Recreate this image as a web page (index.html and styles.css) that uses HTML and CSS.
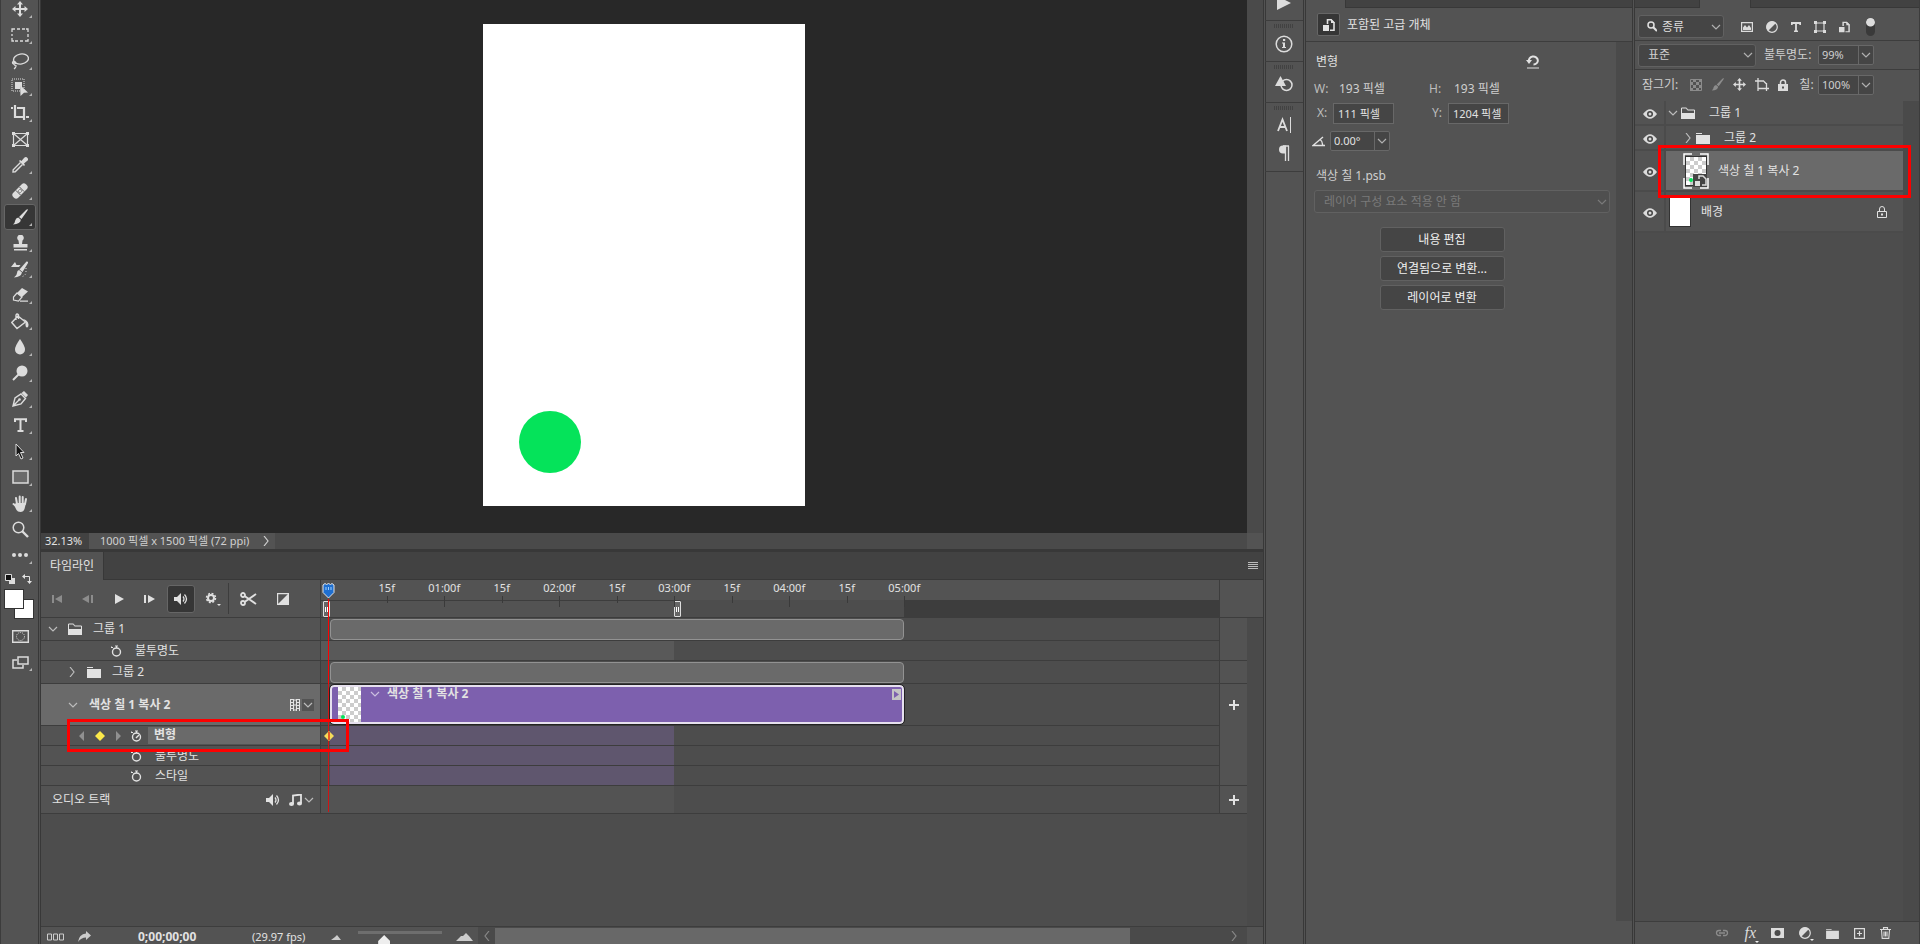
FILE: index.html
```html
<!DOCTYPE html>
<html lang="ko">
<head>
    <meta charset="UTF-8">
    <meta name="viewport" content="width=device-width, initial-scale=1.0">
    <title>타임라인</title>
    <link rel="stylesheet" href="styles.css">
</head>
<body>
    <!-- shared icons -->
    <svg class="defs" aria-hidden="true">
        <symbol id="down" viewBox="0 0 10 10"><path d="M1 3l4 4 4-4" fill="none" stroke="currentColor" stroke-width="1.2"/></symbol>
        <symbol id="right" viewBox="0 0 10 10"><path d="M3 0l4 5-4 5" fill="none" stroke="currentColor" stroke-width="1.2"/></symbol>
        <symbol id="folder" viewBox="0 0 14 12"><path d="M0 1h6v1H0zM0 3h14v9H0z" fill="currentColor"/></symbol>
        <symbol id="folder-open" viewBox="0 0 14 12"><path d="M.5 11V1h5l1 2h7v8z" fill="none" stroke="currentColor"/><path d="M0 6h14v6H0z" fill="currentColor"/></symbol>
        <symbol id="watch" viewBox="0 0 12 12"><circle cx="6.500" cy="7" r="4" fill="none" stroke="currentColor" stroke-width="1.400"/><path d="M5 1h3M6.500 1v2M1.500 1.500l2 2M1 2.500h2" stroke="currentColor" fill="none"/></symbol>
        <symbol id="speaker" viewBox="0 0 14 12"><path d="M0 4h3l4-4v12L3 8H0z" fill="currentColor"/><path d="M9 3.500q2 2.500 0 5M10.500 1.500q4 4.500 0 9" fill="none" stroke="currentColor" stroke-width="1.300"/></symbol>
        <symbol id="plus" viewBox="0 0 10 10"><path d="M4 0h2v4h4v2H6v4H4V6H0V4h4z" fill="currentColor"/></symbol>
        <symbol id="move" viewBox="0 0 16 16"><path d="M8 0l3 3.500H9V7h3.500V5L16 8l-3.500 3V9H9v3.500h2L8 16l-3-3.500h2V9H3.500v2L0 8l3.500-3v2H7V3.500H5z" fill="currentColor"/></symbol>
        <symbol id="brush" viewBox="0 0 16 16"><path d="M15.500 0q.5.5 0 1.500L9.500 10 7 8 14 1zM6.200 8.500l2.600 2.200Q8.500 15 1 15.500 3 14 3.200 11.500 3.800 9 6.200 8.500z" fill="currentColor"/></symbol>
        <symbol id="half-circle" viewBox="0 0 12 12"><circle cx="6" cy="6" r="5.300" fill="none" stroke="currentColor" stroke-width="1.200"/><path d="M10 2A5.600 5.600 0 0 0 2 10z" fill="currentColor"/></symbol>
        <symbol id="smart" viewBox="0 0 12 12"><path d="M4.500 5V.7h3.500l3 3v7.600H7" fill="none" stroke="currentColor" stroke-width="1.600"/><path d="M8 0v4h4zM0 6h6v6H0z" fill="currentColor"/></symbol>
        <symbol id="eye" viewBox="0 0 14 10"><path d="M0 5q7-9.500 14 0-7 9.500-14 0z" fill="currentColor"/><circle cx="7" cy="5" r="3" fill="#454545"/><circle cx="7" cy="5" r="1.500" fill="currentColor"/></symbol>
        <symbol id="checks" viewBox="0 0 12 12"><path d="M.5.5h11v11H.5z" fill="none" stroke="currentColor"/><path d="M3 0h3v3H3zM9 0h3v3H9zM0 3h3v3H0zM6 3h3v3H6zM3 6h3v3H3zM9 6h3v3H9zM0 9h3v3H0zM6 9h3v3H6z" fill="currentColor"/></symbol>
    </svg>

    <div class="app">
        <nav class="toolbar" aria-label="도구">
            <button class="tool" type="button" aria-label="이동"><svg width="16" height="16"><use href="#move"/></svg></button>
            <button class="tool" type="button" aria-label="선택 윤곽"><svg width="18" height="14" viewBox="0 0 18 14"><path d="M1 4V1h3M6 1h3M11 1h3M15 1h2v3M17 6v3M17 11v2h-3M12 13H9M7 13H4M3 13H1v-3M1 8V6" fill="none" stroke="currentColor" stroke-width="1.300"/></svg></button>
            <button class="tool" type="button" aria-label="올가미"><svg width="18" height="17" viewBox="0 0 18 17"><ellipse cx="10" cy="6" rx="7.500" ry="5" transform="rotate(-10 10 6)" fill="none" stroke="currentColor" stroke-width="1.400"/><path d="M2.500 8q-2 2 0 3 3 0 2-2-2-1-2.500 1 2 3 3 3-.5 2-2 3" fill="none" stroke="currentColor" stroke-width="1.300"/></svg></button>
            <button class="tool" type="button" aria-label="개체 선택"><svg width="18" height="18" viewBox="0 0 18 18"><path d="M1 1h12v12H1z" fill="none" stroke="currentColor" stroke-dasharray="1 1"/><path d="M4 4h7v5L9 7v4H4zM9 7l8 7.500-4 .2L9.500 18z" fill="currentColor"/></svg></button>
            <button class="tool" type="button" aria-label="자르기"><svg width="18" height="18" viewBox="0 0 18 18"><path d="M0 4h2M4 1v12h10M6 4h7v12M15 13h3" fill="none" stroke="currentColor" stroke-width="2.200"/></svg></button>
            <button class="tool plain" type="button" aria-label="프레임"><svg width="17" height="15" viewBox="0 0 17 15"><path d="M1.500 1.500h14v12h-14zl14 12M15.500 1.500l-14 12" fill="none" stroke="currentColor" stroke-width="1.200"/><path d="M0 0h3v3H0zM14 0h3v3h-3zM0 12h3v3H0zM14 12h3v3h-3z" fill="currentColor"/></svg></button>
            <button class="tool" type="button" aria-label="스포이드"><svg width="16" height="16" viewBox="0 0 16 16"><path d="M8.500 5.500L1.200 12.800l-.2 2.200 2.200-.2 7.300-7.300" fill="none" stroke="currentColor" stroke-width="1.400"/><path d="M7 4l1-1 1.500 1L12 1q2-2 3.500 0t-.5 3l-3 2.500 1 1.500-1 1z" fill="currentColor"/></svg></button>
            <button class="tool" type="button" aria-label="복구 브러시"><svg width="18" height="18" viewBox="0 0 18 18"><rect x="0" y="5.500" width="18" height="7" rx="3" transform="rotate(-45 9 9)" fill="currentColor"/><path d="M5 8.500L9.500 13M8.500 5L13 9.500" stroke="#535353"/><path d="M9 7v1M9 10v1M7 9h1M10 9h1" stroke="#535353"/></svg></button>
            <button class="tool active" type="button" aria-label="브러시"><svg width="16" height="16"><use href="#brush"/></svg></button>
            <button class="tool" type="button" aria-label="도장"><svg width="15" height="16" viewBox="0 0 15 16"><path d="M5.500 5.500a3.300 3.300 0 1 1 4 0L9 9h5.500v3.500H.5V9H6zM1 14h13v1.400H1z" fill="currentColor"/></svg></button>
            <button class="tool" type="button" aria-label="작업 내역 브러시"><svg width="18" height="17" viewBox="0 0 18 17"><path d="M17 2l-5.500 9L8.500 8.500 15.500.5q2-.5 1.500 1.500zM8 9l3 2.500Q10 16 3 16.500q3-2 3-4.500T8 9zM0 6l4-5 1.500 3h4L8 6z" fill="currentColor"/><path d="M15 7v5q-1 3-5 4" fill="none" stroke="currentColor" stroke-dasharray="1 2"/></svg></button>
            <button class="tool" type="button" aria-label="지우개"><svg width="17" height="14" viewBox="0 0 17 14"><path d="M5 5l5-5 6 3.500L10 9z" fill="currentColor"/><path d="M5 5L1.500 9v3l5 1.200L10 9zM8 13.200h8" fill="none" stroke="currentColor" stroke-width="1.200"/></svg></button>
            <button class="tool" type="button" aria-label="페인트 통"><svg width="18" height="17" viewBox="0 0 18 17"><path d="M7 3l7.500 6L6 15.500.8 9.500zM5 7V2q1-2 2.500 0v4" fill="none" stroke="currentColor" stroke-width="1.400"/><path d="M12 6q5 1 5.500 5.500 0 3-1.500 3t-1.500-3V9z" fill="currentColor"/></svg></button>
            <button class="tool" type="button" aria-label="흐림"><svg width="12" height="16" viewBox="0 0 12 16"><path d="M6 0q5 7 5 10.500a5 5 0 0 1-10 0Q1 7 6 0z" fill="currentColor"/></svg></button>
            <button class="tool" type="button" aria-label="닷지"><svg width="16" height="16" viewBox="0 0 16 16"><circle cx="10" cy="6" r="5.500" fill="currentColor"/><path d="M1 15l6-6" stroke="currentColor" stroke-width="2"/></svg></button>
            <button class="tool" type="button" aria-label="펜"><svg width="16" height="16" viewBox="0 0 16 16"><path d="M1 15L3 7l6-4 4.500 4.500L9 13zl6-6" fill="none" stroke="currentColor" stroke-width="1.400"/><circle cx="7.500" cy="8.500" r="1.300" fill="currentColor"/><path d="M9.500 2L12 0l4 4-2 2.500z" fill="currentColor"/></svg></button>
            <button class="tool" type="button" aria-label="문자"><svg width="13" height="14" viewBox="0 0 13 14"><path d="M1 4V1.200h11V4M6.500 1v12M3.500 13h6" fill="none" stroke="currentColor" stroke-width="2"/></svg></button>
            <button class="tool" type="button" aria-label="경로 선택"><svg width="12" height="17" viewBox="0 0 12 17"><path d="M2 1l8 8.500H6.500L9 15l-2 1-2.500-5.500L2 13z" fill="#151515" stroke="currentColor"/></svg></button>
            <button class="tool" type="button" aria-label="사각형"><svg width="17" height="14" viewBox="0 0 17 14"><path d="M1 1h15v12H1z" fill="#6b6b6b" stroke="currentColor" stroke-width="1.500"/></svg></button>
            <button class="tool" type="button" aria-label="손"><svg width="17" height="17" viewBox="0 0 17 17"><path d="M5 9L4 3M7.700 8V1.500M10.700 8V2M13 9l1-5M5.500 12L1.500 9" stroke="currentColor" stroke-width="2" stroke-linecap="round"/><path d="M4 8h10l-1.500 6q-1 3-4 3t-4-2L2 10z" fill="currentColor"/></svg></button>
            <button class="tool plain" type="button" aria-label="돋보기"><svg width="17" height="17" viewBox="0 0 17 17"><circle cx="6.500" cy="6.500" r="5.300" fill="none" stroke="currentColor" stroke-width="1.500"/><path d="M10 10l6 6" stroke="currentColor" stroke-width="2.400"/></svg></button>
            <button class="tool" type="button" aria-label="도구 모음 편집"><svg width="16" height="4" viewBox="0 0 16 4"><circle cx="2" cy="2" r="2" fill="currentColor"/><circle cx="8" cy="2" r="2" fill="currentColor"/><circle cx="14" cy="2" r="2" fill="currentColor"/></svg></button>
            <div class="swap">
                <svg width="10" height="10" viewBox="0 0 10 10"><path d="M4 4h6v6H4z" fill="#ddd"/><path d="M.5.5h6v6h-6z" fill="#111" stroke="#ddd"/></svg>
                <svg width="10" height="10" viewBox="0 0 10 10"><path d="M3 2.500h4.500V7" fill="none" stroke="currentColor"/><path d="M0 2.500L3 0v5zM5 7h5l-2.500 3z" fill="currentColor"/></svg>
            </div>
            <div class="swatches"><span class="swatch back"></span><span class="swatch front"></span></div>
            <button class="tool plain" type="button" aria-label="빠른 마스크"><svg width="17" height="13" viewBox="0 0 17 13"><path d="M.7.7h15.600v11.600H.7z" fill="none" stroke="currentColor" stroke-width="1.400"/><circle cx="8.500" cy="6.500" r="4" fill="none" stroke="currentColor" stroke-dasharray="1 1"/></svg></button>
            <button class="tool" type="button" aria-label="화면 모드"><svg width="17" height="13" viewBox="0 0 17 13"><path d="M5 4H1v8h10V9M6 1h10v7H6z" fill="none" stroke="currentColor" stroke-width="1.500"/></svg></button>
        </nav>

        <main class="workspace">
            <section class="document">
                <div class="canvas-area">
                    <div class="artboard"><div class="ball"></div></div>
                </div>
                <div class="scroll-strip"></div>
            </section>
            <div class="status">
                <span class="zoom">32.13%</span>
                <span class="doc-size">1000 픽셀 x 1500 픽셀 (72 ppi)<svg width="10" height="10"><use href="#right"/></svg></span>
                <span class="corner"></span>
            </div>

            <section class="timeline">
                <div class="tab-strip">
                    <button class="tab" type="button">타임라인</button>
                    <button class="menu-btn" type="button" aria-label="메뉴"><svg width="10" height="7" viewBox="0 0 10 7"><path d="M0 .5h10M0 2.500h10M0 4.500h10M0 6.500h10" stroke="currentColor"/></svg></button>
                </div>

                <div class="timeline-head">
                    <div class="controls">
                        <button class="ctl dim" type="button" aria-label="처음으로"><svg width="10" height="8" viewBox="0 0 10 8"><path d="M0 0h2v8H0zM10 0v8L3 4z" fill="currentColor"/></svg></button>
                        <button class="ctl dim" type="button" aria-label="이전 프레임"><svg width="11" height="8" viewBox="0 0 11 8"><path d="M9 0h2v8H9zM7 0v8L0 4z" fill="currentColor"/></svg></button>
                        <button class="ctl" type="button" aria-label="재생"><svg width="10" height="10" viewBox="0 0 10 10"><path d="M1 0l9 5-9 5z" fill="currentColor"/></svg></button>
                        <button class="ctl" type="button" aria-label="다음 프레임"><svg width="11" height="8" viewBox="0 0 11 8"><path d="M0 0h2v8H0zM4 0v8l7-4z" fill="currentColor"/></svg></button>
                        <button class="ctl pressed" type="button" aria-label="오디오"><svg width="14" height="12"><use href="#speaker"/></svg></button>
                        <button class="ctl gear" type="button" aria-label="설정"><svg width="16" height="16" viewBox="0 0 16 16"><circle cx="6" cy="7" r="3" fill="none" stroke="currentColor" stroke-width="2"/><circle cx="6" cy="7" r="4.500" fill="none" stroke="currentColor" stroke-width="1.500" stroke-dasharray="2 1.530"/><path d="M12 13h4l-2 2z" fill="currentColor"/></svg></button>
                        <span class="divider"></span>
                        <button class="ctl cut" type="button" aria-label="분할"><svg width="17" height="14" viewBox="0 0 17 14"><circle cx="3" cy="3" r="2" fill="none" stroke="currentColor" stroke-width="1.800"/><circle cx="3" cy="11" r="2" fill="none" stroke="currentColor" stroke-width="1.800"/><path d="M4.500 4L16 12M4.500 10L16 2" stroke="currentColor" stroke-width="2"/></svg></button>
                        <button class="ctl" type="button" aria-label="전환 효과"><svg width="12" height="12" viewBox="0 0 12 12"><path d="M.6.6h10.800v10.800H.6z" fill="none" stroke="currentColor" stroke-width="1.200"/><path d="M12 0v12H0z" fill="currentColor"/></svg></button>
                    </div>
                    <div class="ruler">
                        <div class="ticks">
                            <span>15f</span><span class="full">01:00f</span><span>15f</span><span class="full">02:00f</span><span>15f</span><span class="full">03:00f</span><span>15f</span><span class="full">04:00f</span><span>15f</span><span class="full">05:00f</span>
                        </div>
                        <div class="work-area">
                            <span class="work"><i class="grip"></i><i class="grip"></i></span>
                            <span class="rest"></span>
                        </div>
                        <div class="playhead">
                            <svg width="13" height="16" viewBox="0 0 13 16"><path d="M1 2l2-1.500 1.500 1 2-1 2 1 1.500-1L12 2v7.500L6.500 15 1 9.500z" fill="#1f6fd0" stroke="#e4e4e4"/><path d="M4 4v3M6.500 4v3M9 4v3" stroke="#9cd0ff"/></svg>
                            <span class="needle"></span>
                        </div>
                    </div>
                    <div class="head-end"></div>
                </div>

                <div class="timeline-main">
                    <div class="tracks">
                        <div class="track h22">
                            <div class="label in1"><svg width="10" height="10"><use href="#down"/></svg><svg class="folder" width="14" height="12"><use href="#folder-open"/></svg><span>그룹 1</span></div>
                            <div class="lane"><div class="clip"></div></div>
                            <div class="add open"></div>
                        </div>
                        <div class="track h19">
                            <div class="label in4"><svg width="12" height="12"><use href="#watch"/></svg><span>불투명도</span></div>
                            <div class="lane"><div class="span grey"></div></div>
                            <div class="add"></div>
                        </div>
                        <div class="track h22">
                            <div class="label in2"><svg width="10" height="10"><use href="#right"/></svg><svg class="folder" width="14" height="12"><use href="#folder"/></svg><span>그룹 2</span></div>
                            <div class="lane"><div class="clip"></div></div>
                            <div class="add"></div>
                        </div>
                        <div class="track h41">
                            <div class="label in3 selected"><svg width="10" height="10"><use href="#down"/></svg><b>색상 칠 1 복사 2</b>
                                <span class="right-icons"><svg width="10" height="12" viewBox="0 0 10 12"><path d="M.5 0v12M9.500 0v12M3.500 0v12M6.500 0v12M3.500 1h3M3.500 6h3M3.500 11h3" stroke="currentColor"/><path d="M0 .5h3M0 3.500h3M0 6.500h3M0 9.500h3M7 .5h3M7 3.500h3M7 6.500h3M7 9.500h3" stroke="currentColor"/></svg><button class="drop" type="button" aria-label="비디오"><svg width="10" height="10"><use href="#down"/></svg></button></span>
                            </div>
                            <div class="lane">
                                <div class="clip purple">
                                    <div class="clip-thumb checker"><i class="dot"></i></div>
                                    <svg width="10" height="10"><use href="#down"/></svg>
                                    <b>색상 칠 1 복사 2</b>
                                    <button class="clip-btn" type="button" aria-label="클립 옵션"><svg width="9" height="11" viewBox="0 0 9 11"><path d="M0 0h9v11H0z" fill="#c4c4c4"/><path d="M2 2l5 3.500L2 9z" fill="#7d60ae"/></svg></button>
                                </div>
                            </div>
                            <div class="add open"><button type="button" aria-label="미디어 추가"><svg width="10" height="10"><use href="#plus"/></svg></button></div>
                        </div>
                        <div class="track h19 marked">
                            <div class="label keys">
                                <svg class="nav" width="44" height="10" viewBox="0 0 44 10"><path d="M6 0v10L1 5zM38 0v10l5-5z" fill="#909090"/><path d="M22 0l5 5-5 5-5-5z" fill="#fce94a"/></svg>
                                <svg width="12" height="12"><use href="#watch"/><path d="M6 8l3-3" stroke="currentColor" stroke-width="1.500"/></svg>
                                <b class="key-name">변형</b>
                            </div>
                            <div class="lane"><div class="span violet"></div><svg class="keyframe" width="10" height="10" viewBox="0 0 10 10"><path d="M5 0l5 5-5 5-5-5z" fill="#f6dc5a"/><path d="M4 1h2v8H4z" fill="#e55a25"/></svg></div>
                            <div class="add open"></div>
                            <div class="callout"></div>
                        </div>
                        <div class="track h19">
                            <div class="label in5"><svg width="12" height="12"><use href="#watch"/></svg><span>불투명도</span></div>
                            <div class="lane"><div class="span violet"></div></div>
                            <div class="add open"></div>
                        </div>
                        <div class="track h19">
                            <div class="label in5"><svg width="12" height="12"><use href="#watch"/></svg><span>스타일</span></div>
                            <div class="lane"><div class="span violet"></div></div>
                            <div class="add"></div>
                        </div>
                        <div class="track h27">
                            <div class="label audio"><span>오디오 트랙</span>
                                <span class="right-icons"><svg width="14" height="12"><use href="#speaker"/></svg><svg class="note" width="13" height="12" viewBox="0 0 13 12"><path d="M4 10V1.500l8-1V9" fill="none" stroke="currentColor" stroke-width="1.800"/><ellipse cx="2.500" cy="10" rx="2.500" ry="2" fill="currentColor"/><ellipse cx="10.500" cy="9.500" rx="2.500" ry="2" fill="currentColor"/></svg><svg width="10" height="10"><use href="#down"/></svg></span>
                            </div>
                            <div class="lane"><div class="span dark"></div></div>
                            <div class="add"><button type="button" aria-label="오디오 추가"><svg width="10" height="10"><use href="#plus"/></svg></button></div>
                        </div>
                    </div>
                    <div class="scroll-strip"></div>
                </div>

                <div class="timeline-foot">
                    <div class="foot-info">
                        <svg width="18" height="8" viewBox="0 0 18 8"><path d="M.5 1h4v6h-4zM6.500 1h4v6h-4zM12.500 1h4v6h-4z" fill="none" stroke="currentColor"/></svg>
                        <svg width="13" height="11" viewBox="0 0 13 11"><path d="M8 0l5 4.500L8 9V6.500Q3 6.500 0 11 1 3 8 2.500z" fill="currentColor"/></svg>
                        <b class="time">0;00;00;00</b>
                        <span class="fps">(29.97 fps)</span>
                        <svg width="10" height="6" viewBox="0 0 10 6"><path d="M0 6l4-3 2-2 4 5z" fill="currentColor"/></svg>
                        <input class="zoom-slider" type="range" min="0" max="100" value="28" aria-label="타임라인 확대">
                        <svg width="17" height="8" viewBox="0 0 17 8"><path d="M0 8l5-5h2l3-3 3 3 4 5z" fill="currentColor"/></svg>
                    </div>
                    <div class="hscroll"><svg class="flip" width="10" height="10"><use href="#right"/></svg><span class="thumb"></span><svg class="end" width="10" height="10"><use href="#right"/></svg></div>
                    <div class="foot-corner"></div>
                </div>
            </section>
        </main>

        <aside class="dock">
            <div class="dock-group first"><svg width="14" height="14" viewBox="0 0 14 14"><path d="M0 0l14 7-14 7z" fill="currentColor"/></svg></div>
            <div class="dock-group"><i class="dots"></i><svg width="18" height="18" viewBox="0 0 18 18"><circle cx="9" cy="9" r="7.800" fill="none" stroke="currentColor" stroke-width="1.500"/><path d="M8 4h2.200v2H8zM7 7.500h3V12h1v1H7v-1h1V8.500H7z" fill="currentColor"/></svg></div>
            <div class="dock-group"><i class="dots"></i><svg width="18" height="16" viewBox="0 0 18 16"><circle cx="11.500" cy="9" r="5.500" fill="none" stroke="currentColor" stroke-width="1.500"/><path d="M5.500 0L11 10H0z" fill="currentColor"/></svg></div>
            <div class="dock-group last"><i class="dots"></i><svg width="15" height="16" viewBox="0 0 15 16"><path d="M1 14L5.500 2.500 10 14M2.500 10h6" fill="none" stroke="currentColor" stroke-width="1.800"/><path d="M13.500 0v16" stroke="currentColor"/></svg><svg width="12" height="16" viewBox="0 0 12 16"><path d="M7.500 1v15M10.500 1v15M5 1h6" stroke="currentColor" stroke-width="1.300"/><path d="M8 .5v8H5a4 4 0 0 1 0-8z" fill="currentColor"/></svg></div>
        </aside>

        <aside class="properties">
            <div class="tabs"><span class="tab-on"></span></div>
            <div class="prop-head"><span class="type-icon"><svg width="12" height="12"><use href="#smart"/></svg></span><span>포함된 고급 개체</span></div>
            <div class="prop-main">
                <form class="prop-body">
                    <div class="prop-title"><span>변형</span><button class="reset" type="button" aria-label="재설정"><svg width="14" height="14" viewBox="0 0 14 14"><path d="M3 6.500A4.500 4 0 1 1 7.500 9.500" fill="none" stroke="currentColor" stroke-width="2"/><path d="M0 5h6L3 9z" fill="currentColor"/><path d="M1 13h12" stroke="currentColor"/></svg></button></div>
                    <div class="pair sizes"><span class="key">W:</span><span class="value">193 픽셀</span><span class="key">H:</span><span class="value">193 픽셀</span></div>
                    <div class="pair"><label class="key" for="px">X:</label><input class="field" id="px" value="111 픽셀"><label class="key" for="py">Y:</label><input class="field" id="py" value="1204 픽셀"></div>
                    <div class="angle">
                        <label for="angle" aria-label="각도"><svg width="13" height="11" viewBox="0 0 13 11"><path d="M11 1L1 9.500h12M8 3.500q3 2 2.500 6" fill="none" stroke="currentColor" stroke-width="1.400"/></svg></label>
                        <span class="combo"><input id="angle" value="0.00°"><button type="button" aria-label="각도 목록"><svg width="10" height="10"><use href="#down"/></svg></button></span>
                    </div>
                    <label class="file-name" for="comp">색상 칠 1.psb</label>
                    <div class="select disabled"><select id="comp" disabled><option>레이어 구성 요소 적용 안 함</option></select><svg width="10" height="10"><use href="#down"/></svg></div>
                    <div class="actions">
                        <button type="button">내용 편집</button>
                        <button type="button">연결됨으로 변환...</button>
                        <button type="button">레이어로 변환</button>
                    </div>
                </form>
                <div class="scroll-strip"></div>
            </div>
            <div class="prop-foot"></div>
        </aside>

        <aside class="layers">
            <div class="tabs second"><span class="tab-off"></span><span class="tab-on"></span></div>
            <div class="layer-row filter">
                <div class="select kind"><svg class="lens" width="10" height="11" viewBox="0 0 10 11"><circle cx="4" cy="4" r="3" fill="none" stroke="currentColor" stroke-width="1.500"/><path d="M6 6l4 4" stroke="currentColor" stroke-width="2.200"/></svg><select aria-label="필터"><option>종류</option></select><svg class="arrow" width="10" height="10"><use href="#down"/></svg></div>
                <svg width="12" height="10" viewBox="0 0 12 10"><path d="M.6.6h10.800v8.800H.6z" fill="none" stroke="currentColor" stroke-width="1.200"/><path d="M2 8V5.500L4 3l2 2.500L8 3l2 3v2z" fill="currentColor"/></svg>
                <svg width="12" height="12"><use href="#half-circle"/></svg>
                <svg width="10" height="10" viewBox="0 0 10 10"><path d="M.8 3V1h8.400v2M5 1v8.300M3 9.300h4" fill="none" stroke="currentColor" stroke-width="1.800"/></svg>
                <svg width="12" height="12" viewBox="0 0 12 12"><path d="M2 2h8v8H2z" fill="none" stroke="currentColor" stroke-width="1.200"/><path d="M0 0h3v3H0zM9 0h3v3H9zM0 9h3v3H0zM9 9h3v3H9z" fill="currentColor"/></svg>
                <svg width="11" height="12" viewBox="0 0 12 12"><use href="#smart"/></svg>
                <span class="toggle"></span>
            </div>
            <div class="layer-row blend">
                <div class="select mode"><select aria-label="혼합 모드"><option>표준</option></select><svg width="10" height="10"><use href="#down"/></svg></div>
                <label for="opacity">불투명도:</label>
                <span class="combo"><input id="opacity" value="99%"><button type="button" aria-label="불투명도 조절"><svg width="10" height="10"><use href="#down"/></svg></button></span>
            </div>
            <div class="layer-row lock">
                <span>잠그기:</span>
                <span class="lock-icons">
                    <svg class="dim" width="12" height="12"><use href="#checks"/></svg>
                    <svg class="dim" width="13" height="13"><use href="#brush"/></svg>
                    <svg width="13" height="13"><use href="#move"/></svg>
                    <svg width="14" height="13" viewBox="0 0 14 13"><path d="M3 0v13M0 3h8M3 10.500h11M11.500 5v8M8 2.500l3.500 3.500" fill="none" stroke="currentColor" stroke-width="1.300"/></svg>
                    <svg width="10" height="12" viewBox="0 0 10 12"><path d="M2.500 6V3.500a2.500 2.500 0 0 1 5 0V6" fill="none" stroke="currentColor" stroke-width="1.500"/><path d="M0 5h10v7H0z" fill="currentColor"/><path d="M4 7.500h2v2H4z" fill="#535353"/></svg>
                </span>
                <label for="fill">칠:</label>
                <span class="combo"><input id="fill" value="100%"><button type="button" aria-label="칠 조절"><svg width="10" height="10"><use href="#down"/></svg></button></span>
            </div>
            <div class="layer-main">
                <ul class="layer-list">
                    <li class="h23"><span class="eye"><svg width="14" height="10"><use href="#eye"/></svg></span><div class="item"><svg width="10" height="10"><use href="#down"/></svg><svg class="folder" width="14" height="12"><use href="#folder-open"/></svg><span class="name">그룹 1</span></div></li>
                    <li class="h23"><span class="eye"><svg width="14" height="10"><use href="#eye"/></svg></span><div class="item nested"><svg width="10" height="10"><use href="#right"/></svg><svg class="folder" width="14" height="12"><use href="#folder"/></svg><span class="name">그룹 2</span></div></li>
                    <li class="h39 marked"><span class="eye"><svg width="14" height="10"><use href="#eye"/></svg></span><div class="item chosen">
                        <div class="thumb"><div class="checker"><i class="dot"></i></div><svg width="26" height="36" viewBox="0 0 26 36"><path d="M1 12V1h8M17 1h8v11M25 25v10h-8M9 35H1V25" fill="none" stroke="#fff" stroke-width="1.500"/><path d="M10 21h14v13H10z" fill="#454545"/><path d="M16 26v-3h4l3 3v6h-4" fill="none" stroke="#ddd" stroke-width="1.500"/><path d="M12 28h5v5h-5z" fill="#ddd"/></svg></div><span>색상 칠 1 복사 2</span></div><div class="callout"></div></li>
                    <li class="h39"><span class="eye"><svg width="14" height="10"><use href="#eye"/></svg></span><div class="item base"><span class="paper"></span><span>배경</span><svg class="padlock" width="10" height="12" viewBox="0 0 10 12"><path d="M2.500 5V3a2.500 2.500 0 0 1 5 0v2M.5 5.500h9v6h-9z" fill="none" stroke="currentColor"/><path d="M4 7.500h2v2H4z" fill="currentColor"/></svg></div></li>
                </ul>
                <div class="scroll-strip"></div>
            </div>
            <div class="layer-foot">
                <svg class="dim" width="14" height="8" viewBox="0 0 14 8"><path d="M6 1.500H4a2.500 2.500 0 0 0 0 5h2M8 1.500h2a2.500 2.500 0 0 1 0 5H8M4 4h6" fill="none" stroke="currentColor" stroke-width="1.300"/></svg>
                <span class="fx more">fx</span>
                <svg width="13" height="10" viewBox="0 0 13 10"><path d="M0 0h13v10H0z" fill="currentColor"/><circle cx="6.500" cy="5" r="3" fill="#4b4b4b"/></svg>
                <span class="more"><svg width="12" height="12"><use href="#half-circle"/></svg></span>
                <svg width="13" height="11" viewBox="0 0 14 12"><use href="#folder"/></svg>
                <svg width="11" height="11" viewBox="0 0 11 11"><path d="M.6.6h9.800v9.800H.6zM5.500 3v5M3 5.500h5" fill="none" stroke="currentColor" stroke-width="1.200"/></svg>
                <svg width="11" height="12" viewBox="0 0 11 12"><path d="M0 2.500h11M3.500 2V.6h4V2M1.500 3l.7 8.400h6.600l.7-8.400M4 4.500v5M5.500 4.500v5M7 4.500v5" fill="none" stroke="currentColor" stroke-width="1.100"/></svg>
            </div>
        </aside>
    </div>
</body>
</html>
```
FILE: styles.css
```css
* {
    box-sizing: border-box;
}
body {
    margin: 0;
    font-family: "Noto Sans", "Noto Sans CJK KR", sans-serif;
    font-size: 12px;
    line-height: 16px;
    color: #e2e2e2;
    background-color: #535353;
}
button, input, select {
    font: inherit;
    color: inherit;
    margin: 0;
    padding: 0;
    border: none;
    background: none;
    border-radius: 0;
}
input {
    font-size: 11px;
}
svg {
    display: block;
    flex: none;
}
.defs {
    position: absolute;
    width: 0;
    height: 0;
}
.app {
    display: grid;
    grid-template-columns: 40px minmax(0, 1fr) 43px 329px 285px;
    height: 100vh;
    overflow: hidden;
    border-left: 1px solid #3c3c3c;
}
.dim {
    color: #8c8c8c;
}
.scroll-strip {
    flex: none;
    width: 16px;
    background-color: #4a4a4a;
}
.callout {
    position: absolute;
    z-index: 5;
    border: 3px solid #fd0000;
    pointer-events: none;
}
.checker {
    background: repeating-conic-gradient(#ccc 0 25%, #fff 0 50%) 0 0 / 8px 8px;
}

/* toolbar */
.toolbar {
    display: flex;
    flex-direction: column;
    margin-top: -4px;
    padding-left: 3px;
    border-right: 3px double #383838;
}
.tool {
    position: relative;
    display: flex;
    flex: none;
    align-items: center;
    justify-content: center;
    width: 32px;
    height: 26px;
    border: 1px solid transparent;
    border-radius: 3px;
    color: #dcdcdc;
}
.tool::after {
    content: "";
    position: absolute;
    right: 3px;
    bottom: 3px;
    border-left: 3px solid transparent;
    border-bottom: 3px solid #b5b5b5;
}
.tool.plain::after {
    display: none;
}
.tool.active {
    background-color: #363636;
    border-color: #666;
}
.swap {
    display: flex;
    justify-content: space-between;
    padding: 6px 6px 4px 1px;
}
.swatches {
    position: relative;
    height: 33px;
    margin-bottom: 2px;
}
.swatch {
    position: absolute;
    width: 20px;
    height: 20px;
    background-color: #fff;
    border: 1px solid #333;
}
.front {
    left: 0;
    top: 1px;
}
.back {
    left: 10px;
    top: 11px;
}

/* document */
.workspace {
    display: flex;
    flex-direction: column;
    min-width: 0;
}
.document {
    display: flex;
    flex: 0 0 533px;
}
.canvas-area {
    display: flex;
    flex: 1;
    align-items: center;
    justify-content: center;
    padding-bottom: 3px;
    background-color: #282828;
}
.artboard {
    position: relative;
    width: 322px;
    height: 482px;
    background-color: #fff;
}
.ball {
    position: absolute;
    left: 36px;
    top: 387px;
    width: 62px;
    height: 62px;
    border-radius: 50%;
    background-color: #05e35a;
}
.status {
    display: flex;
    height: 19px;
    font-size: 11px;
    background-color: #4a4a4a;
    border-bottom: 3px solid #383838;
}
.zoom {
    width: 48px;
    padding-left: 4px;
    background-color: #424242;
}
.doc-size {
    display: flex;
    align-items: center;
    gap: 12px;
    padding: 0 4px 0 11px;
    background-color: #535353;
    color: #d0d0d0;
}
.corner {
    width: 16px;
    margin-left: auto;
    background-color: #535353;
}

/* timeline */
.timeline {
    display: flex;
    flex: 1;
    flex-direction: column;
    min-height: 0;
}
.tab-strip {
    display: flex;
    align-items: center;
    justify-content: space-between;
    height: 28px;
    background-color: #424242;
    border-bottom: 1px solid #383838;
}
.tab {
    align-self: stretch;
    margin-bottom: -1px;
    padding: 0 9px;
    background-color: #535353;
    border-right: 1px solid #383838;
}
.menu-btn {
    padding: 4px 5px;
    color: #bbb;
}
.timeline-head {
    display: grid;
    grid-template-columns: 280px minmax(0, 1fr) 43px;
    height: 38px;
    border-bottom: 1px solid #3d3d3d;
}
.controls {
    display: flex;
    align-items: center;
    border-right: 1px solid #3d3d3d;
}
.ctl {
    display: flex;
    align-items: center;
    justify-content: center;
    width: 31px;
    height: 28px;
    border-radius: 3px;
    color: #e0e0e0;
}
.ctl.dim {
    color: #8c8c8c;
}
.pressed {
    width: 28px;
    margin-left: 2px;
    background-color: #363636;
    border: 1px solid #666;
}
.gear {
    margin-left: 2px;
}
.divider {
    width: 1px;
    height: 31px;
    background-color: #3d3d3d;
}
.cut {
    width: 38px;
}
.ruler {
    position: relative;
    display: flex;
    flex-direction: column;
    border-right: 1px solid #3d3d3d;
}
.ticks {
    display: grid;
    grid-template-columns: repeat(10, 1fr);
    width: 575px;
    height: 20px;
    margin-left: 37px;
    font-size: 11px;
    text-align: center;
}
.ticks span {
    position: relative;
}
.ticks span::after {
    content: "";
    position: absolute;
    left: 50%;
    top: 16px;
    width: 1px;
    height: 7px;
    background-color: #3a3a3a;
}
.ticks .full::after {
    height: 11px;
}
.work-area {
    display: flex;
    flex: 1;
    background-color: #3d3d3d;
}
.work {
    display: flex;
    justify-content: space-between;
    width: 360px;
    padding-left: 2px;
    border-top: 1px solid #3d3d3d;
}
.work, .rest {
    background-color: #535353;
}
.rest {
    width: 223px;
    background-color: #4d4d4d;
}
.grip {
    width: 7px;
    border: 1px solid #ddd;
    border-radius: 1px;
    background: linear-gradient(#fff, #fff) 1px 5px / 1px 5px no-repeat, linear-gradient(#fff, #fff) 3px 5px / 1px 5px no-repeat, #666;
}
.playhead {
    position: absolute;
    z-index: 3;
    left: 1px;
    top: 3px;
    width: 13px;
}
.needle {
    display: block;
    width: 1px;
    height: 213px;
    margin-left: 6px;
    background: linear-gradient(#f00 0 85px, #d01414 85px);
}
.timeline-main {
    display: flex;
    flex: 1;
    min-height: 0;
    background-color: #4d4d4d;
}
.tracks {
    flex: 1;
    min-width: 0;
}
.track {
    position: relative;
    display: grid;
    grid-template-columns: 280px minmax(0, 1fr) 27px;
}
.h19 { height: 20px; }
.h22 { height: 23px; }
.h27 { height: 28px; }
.h41 { height: 42px; }
.label {
    display: flex;
    align-items: center;
    background-color: #535353;
    border-right: 1px solid #3d3d3d;
    border-bottom: 1px solid #3d3d3d;
}
.label .folder {
    margin: 0 11px 0 10px;
}
.in1 { padding-left: 7px; }
.in2 { padding-left: 26px; }
.in3 { padding-left: 27px; gap: 11px; }
.in4 { padding-left: 69px; gap: 13px; }
.in5 { padding-left: 89px; gap: 13px; }
.selected {
    background-color: #6a6a6a;
}
.label use[href="#down"], .label use[href="#right"], .item use[href="#down"], .item use[href="#right"] {
    color: #bcbcbc;
}
.right-icons {
    display: flex;
    align-items: center;
    gap: 2px;
    margin-left: auto;
    padding-right: 6px;
}
.note {
    margin-left: 7px;
}
.drop {
    background-color: #535353;
    padding: 1px;
}
.keys {
    padding: 1px 0 1px 37px;
}
.nav {
    margin-right: 8px;
}
.key-name {
    align-self: stretch;
    flex: 1;
    margin-left: 6px;
    padding-left: 6px;
    background-color: #6a6a6a;
}
.audio {
    padding-left: 11px;
}
.lane {
    position: relative;
    border-right: 1px solid #3d3d3d;
    border-bottom: 1px solid #3d3d3d;
}
.clip {
    width: 574px;
    height: 21px;
    margin: 1px 0 0 9px;
    border: 1px solid #929292;
    border-radius: 4px;
    background-color: #6a6a6a;
}
.purple {
    display: flex;
    height: 39px;
    border: 2px solid #e6e0ee;
    background-color: #7d60ae;
    outline: 1px solid #222;
}
.clip-thumb {
    position: relative;
    width: 23px;
    margin: 0 9px 0 6px;
}
.dot {
    position: absolute;
    left: 3px;
    bottom: 3px;
    width: 4px;
    height: 4px;
    border-radius: 50%;
    background-color: #05e35a;
}
.purple > svg {
    margin: 2px 7px 0 0;
    color: #cbbfdf;
}
.purple > b {
    line-height: 14px;
}
.clip-btn {
    align-self: flex-start;
    margin: 2px 1px 0 auto;
}
.span {
    width: 353px;
    height: 100%;
}
.grey { background-color: #595959; }
.dark { background-color: #535353; }
.violet {
    width: 344px;
    margin-left: 9px;
    background-color: #5f566e;
}
.keyframe {
    position: absolute;
    left: 3px;
    top: 5px;
    z-index: 4;
}
.add {
    display: flex;
    align-items: center;
    justify-content: center;
    background-color: #535353;
    border-bottom: 1px solid #3d3d3d;
}
.add.open {
    border-bottom-color: #535353;
}
.track .callout {
    left: 26px;
    top: -7px;
    width: 282px;
    height: 33px;
}
.timeline-foot {
    display: flex;
    height: 18px;
    border-top: 1px solid #3d3d3d;
}
.foot-info {
    display: flex;
    align-items: center;
    width: 437px;
    padding: 2px 0 0 6px;
}
.foot-info svg {
    color: #ccc;
}
.foot-info svg:nth-child(2) {
    margin-left: 13px;
}
.time {
    width: 114px;
    margin-left: 47px;
}
.fps {
    width: 79px;
    font-size: 11px;
}
.zoom-slider {
    appearance: none;
    width: 84px;
    height: 17px;
    margin: 0 14px 0 17px;
}
.zoom-slider::-webkit-slider-runnable-track {
    height: 3px;
    margin-top: -8px;
    background-color: #6e6e6e;
}
.zoom-slider::-webkit-slider-thumb {
    appearance: none;
    width: 12px;
    height: 12px;
    margin-top: 4px;
    background-color: #eee;
    clip-path: polygon(50% 0, 100% 50%, 100% 100%, 0 100%, 0 50%);
}
.hscroll {
    display: flex;
    flex: 1;
    align-items: center;
    padding: 1px 8px 0 4px;
    background-color: #4a4a4a;
    color: #888;
}
.flip {
    transform: scaleX(-1);
}
.hscroll .thumb {
    width: 635px;
    height: 16px;
    margin-left: 3px;
    background-color: #686868;
}
.end {
    margin-left: auto;
}
.foot-corner {
    width: 16px;
}

/* collapsed panel icons */
.dock {
    padding-left: 1px;
    border-left: 1px solid #383838;
    border-right: 3px double #383838;
    box-shadow: inset 1px 0 #535353, inset 2px 0 #383838;
}
.dock-group {
    display: flex;
    flex-direction: column;
    align-items: center;
    height: 41px;
    padding-top: 3px;
    border-bottom: 1px solid #3d3d3d;
    color: #dcdcdc;
}
.dock-group.first {
    height: 21px;
    padding-top: 0;
}
.first svg {
    margin-top: -4px;
}
.dots {
    width: 20px;
    height: 4px;
    margin-bottom: 7px;
    background: repeating-linear-gradient(90deg, #424242 0 1px, #535353 1px 2px);
}
.dock-group.last {
    height: 69px;
}
.last svg + svg {
    margin-top: 12px;
}

/* properties */
.properties {
    display: flex;
    flex-direction: column;
    border-right: 3px double #383838;
}
.tabs {
    display: flex;
    flex: none;
    height: 8px;
    background-color: #424242;
    border-bottom: 1px solid #383838;
}
.tab-on {
    width: 40px;
    margin-bottom: -1px;
    background-color: #535353;
    border-right: 1px solid #383838;
}
.prop-head {
    display: flex;
    align-items: center;
    gap: 7px;
    height: 34px;
    padding-left: 11px;
    border-bottom: 1px solid #3d3d3d;
}
.type-icon {
    display: grid;
    place-items: center;
    width: 23px;
    height: 23px;
    background-color: #363636;
    border: 1px solid #666;
    border-radius: 2px;
}
.prop-main {
    display: flex;
    flex: 1;
}
.prop-body {
    flex: 1;
    padding: 12px 6px 0 8px;
}
.prop-title {
    display: flex;
    align-items: center;
    justify-content: space-between;
    padding: 0 70px 0 2px;
    margin-bottom: 10px;
}
.pair {
    display: grid;
    grid-template-columns: 19px 96px 19px 96px;
    align-items: center;
    height: 22px;
}
.sizes {
    height: 18px;
    margin-bottom: 4px;
}
.key {
    color: #bdbdbd;
}
.pair label {
    padding-left: 3px;
}
.value {
    padding-left: 6px;
    color: #cfcfcf;
}
.field {
    width: 61px;
    height: 21px;
    padding-left: 4px;
    background-color: #454545;
    border: 1px solid #686868;
}
.angle {
    display: flex;
    align-items: center;
    gap: 5px;
    margin: 7px 0 17px -2px;
}
.combo {
    display: flex;
    width: 56px;
    height: 20px;
    background-color: #454545;
    border: 1px solid #686868;
    border-radius: 2px;
}
.combo input {
    flex: 1;
    min-width: 0;
    padding-left: 3px;
}
.combo button {
    width: 15px;
    padding-left: 2px;
    border-left: 1px solid #686868;
    color: #b0b0b0;
}
.angle .combo {
    width: 60px;
}
.file-name {
    display: block;
    padding-left: 2px;
    margin-bottom: 6px;
    color: #cfcfcf;
}
.select {
    position: relative;
    display: flex;
    align-items: center;
    height: 23px;
    background-color: #454545;
    border: 1px solid #616161;
    border-radius: 3px;
}
.select select {
    appearance: none;
    width: 100%;
    height: 100%;
    padding-left: 9px;
}
.select svg {
    position: absolute;
    right: 2px;
    color: #b0b0b0;
}
.select.disabled {
    background-color: #4f4f4f;
}
.disabled select, .disabled svg {
    color: #7a7a7a;
    opacity: 1;
}
.actions {
    display: flex;
    flex-direction: column;
    align-items: center;
    gap: 4px;
    padding: 14px 40px 0 0;
}
.actions button {
    width: 125px;
    height: 25px;
    background-color: #454545;
    border: 1px solid #616161;
    border-radius: 3px;
    color: #f0f0f0;
}
.prop-foot {
    height: 23px;
}

/* layers */
.layers {
    display: flex;
    flex-direction: column;
    border-right: 1px solid #3c3c3c;
}
.tab-off {
    width: 65px;
    border-right: 1px solid #383838;
}
.second .tab-on {
    width: 51px;
}
.layer-row {
    display: flex;
    align-items: center;
    height: 29px;
    padding-left: 3px;
    border-bottom: 1px solid #3d3d3d;
    color: #cfcfcf;
}
.filter {
    gap: 13px;
    height: 33px;
    padding-top: 5px;
    color: #dcdcdc;
}
.kind {
    width: 86px;
    margin-right: 4px;
}
.kind select {
    padding-left: 23px;
}
.kind .lens {
    left: 8px;
    color: #e0e0e0;
}
.toggle {
    width: 9px;
    height: 18px;
    margin-left: 3px;
    border-radius: 5px;
    background: radial-gradient(circle at 50% 4px, #ddd 4px, #3a3a3a 5px);
}
.mode {
    width: 118px;
    margin-right: 8px;
}
.layer-row .combo {
    margin: 0 45px 0 auto;
}
.lock {
    padding-left: 7px;
    border-bottom: none;
}
.lock-icons {
    display: flex;
    align-items: center;
    gap: 9px;
    margin: 0 11px 0 12px;
    color: #dcdcdc;
}
.layer-main {
    display: flex;
    flex: 1;
    margin-top: 2px;
    background-color: #4d4d4d;
}
.layer-list {
    flex: 1;
    margin: 0;
    padding: 0;
    list-style: none;
}
.layer-list li {
    position: relative;
    display: flex;
    background-color: #535353;
    border-bottom: 2px solid #4b4b4b;
}
.h23 { height: 25px; }
.h39 { height: 41px; }
.eye {
    display: grid;
    place-items: center;
    width: 31px;
    padding: 2px 0 0 1px;
    border-right: 2px solid #4b4b4b;
    color: #dcdcdc;
}
.item {
    display: flex;
    flex: 1;
    align-items: center;
    padding-left: 2px;
}
.item .folder {
    margin: 0 14px 0 3px;
}
.item.nested {
    padding-left: 17px;
}
.item.chosen {
    gap: 9px;
    padding-left: 17px;
    background-color: #6a6a6a;
}
.item .thumb {
    position: relative;
    width: 26px;
    height: 36px;
}
.item .checker {
    position: absolute;
    left: 2px;
    top: 3px;
    width: 22px;
    height: 30px;
    border: 1px solid #333;
}
.item .thumb svg {
    position: relative;
}
.layer-list .callout {
    left: 23px;
    right: -8px;
    top: -6px;
    height: 53px;
}
.item.base {
    gap: 10px;
    padding-left: 3px;
}
.paper {
    width: 22px;
    height: 31px;
    background-color: #fff;
    border: 1px solid #333;
}
.padlock {
    margin-left: auto;
    margin-right: 16px;
}
.layer-foot {
    display: flex;
    align-items: center;
    justify-content: flex-end;
    gap: 15px;
    height: 23px;
    padding-right: 28px;
    border-top: 1px solid #3d3d3d;
    color: #dcdcdc;
}
.fx {
    font-family: "Liberation Serif", serif;
    font-size: 16px;
    font-style: italic;
}
.more {
    position: relative;
}
.more::after {
    content: "";
    position: absolute;
    right: -3px;
    bottom: -2px;
    border: 2px solid transparent;
    border-top-color: #eee;
    border-bottom: none;
}
```
